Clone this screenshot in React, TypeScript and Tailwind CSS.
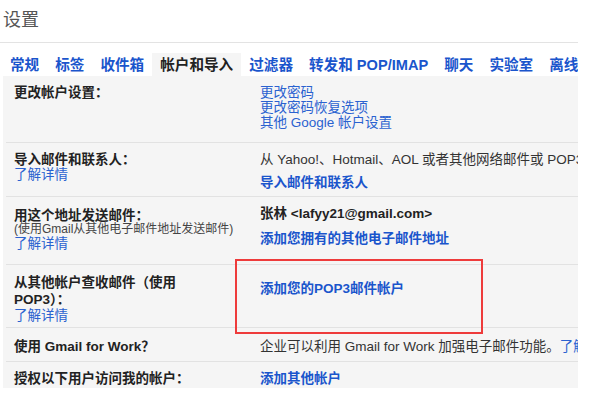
import React from 'react';

const font = {
  fontFamily: '"Liberation Sans", "Noto Sans CJK SC", sans-serif',
};

interface RowProps {
  height: string;
  label: React.ReactNode;
  children: React.ReactNode;
  last?: boolean;
}

const Row: React.FC<RowProps> = ({ height, label, children, last }) => {
  return (
    <div
      className={`flex ml-[3px] ${height} ${
        last ? '' : 'border-b border-[#e2e2e2]'
      }`}
    >
      <div className="w-[254px] shrink-0 pl-[8px] pt-[9px]">{label}</div>
      <div className="pt-[9px] whitespace-nowrap">{children}</div>
    </div>
  );
};

const Learn = () => (
  <div className="text-[13.5px] leading-[15px] text-[#2a62d0]">了解详情</div>
);

const tabs = [
  '常规',
  '标签',
  '收件箱',
  '帐户和导入',
  '过滤器',
  '转发和 POP/IMAP',
  '聊天',
  '实验室',
  '离线',
];

export default function App() {
  return (
    <div
      className="w-[596px] h-[396px] bg-white overflow-hidden text-[#222]"
      style={font}
    >
      <div className="h-[43px] border-b border-[#e3e3e3] w-[578px] pl-[3px] pt-[8px] text-[18px] leading-[24px] text-[#555]">
        设置
      </div>
      <div className="flex pt-[10px] pl-[2px] h-[33px] w-[578px] overflow-hidden whitespace-nowrap">
        {tabs.map((t) => (
          <div
            key={t}
            className={`px-[8px] pt-[2px] text-[14.6px] leading-[20px] font-bold ${
              t === '帐户和导入'
                ? 'bg-[#f5f5f5] text-[#222]'
                : 'text-[#1a55cc]'
            }`}
          >
            {t}
          </div>
        ))}
      </div>
      <div className="relative ml-[3px] w-[575px] h-[312px] bg-[#f5f5f5] overflow-hidden text-[13.5px] leading-[15px]">
        <Row
          height="h-[67px]"
          label={<div className="font-bold">更改帐户设置：</div>}
        >
          <div className="text-[#2a62d0] leading-[15px]">
            <div>更改密码</div>
            <div>更改密码恢复选项</div>
            <div>其他 Google 帐户设置</div>
          </div>
        </Row>
        <Row
          height="h-[54px]"
          label={
            <>
              <div className="font-bold">导入邮件和联系人：</div>
              <Learn />
            </>
          }
        >
          <div className="text-[#333]">
            从 Yahoo!、Hotmail、AOL 或者其他网络邮件或 POP3 帐户导入。
          </div>
          <div className="mt-[8px] font-bold text-[#1a55cc]">
            导入邮件和联系人
          </div>
        </Row>
        <Row
          height="h-[68px]"
          label={
            <>
              <div className="font-bold mt-[2px]">用这个地址发送邮件：</div>
              <div className="text-[12px] leading-[13px] text-[#444]">
                (使用Gmail从其他电子邮件地址发送邮件)
              </div>
              <Learn />
            </>
          }
        >
          <div className="font-bold">张林 &lt;lafyy21@gmail.com&gt;</div>
          <div className="mt-[10px] font-bold text-[#1a55cc]">
            添加您拥有的其他电子邮件地址
          </div>
        </Row>
        <Row
          height="h-[63px]"
          label={
            <div>
              <div className="font-bold leading-[17px]">
                从其他帐户查收邮件（使用
                <br />
                POP3）：
              </div>
              <Learn />
            </div>
          }
        >
          <div className="pt-[7px] font-bold text-[#1a55cc]">
            添加您的POP3邮件帐户
          </div>
        </Row>
        <Row
          height="h-[34px]"
          label={<div className="font-bold pt-[2px]">使用 Gmail for Work？</div>}
        >
          <div className="pt-[2px] text-[#333]">
            企业可以利用 Gmail for Work 加强电子邮件功能。
            <span className="text-[#2a62d0]">了解详情</span>
          </div>
        </Row>
        <Row
          height="h-[26px]"
          last
          label={<div className="font-bold">授权以下用户访问我的帐户：</div>}
        >
          <div className="font-bold text-[#1a55cc]">添加其他帐户</div>
        </Row>
        <div className="absolute left-[232px] top-[183px] w-[248px] h-[75px] border-2 border-[#ee3b3b]" />
      </div>
    </div>
  );
}
